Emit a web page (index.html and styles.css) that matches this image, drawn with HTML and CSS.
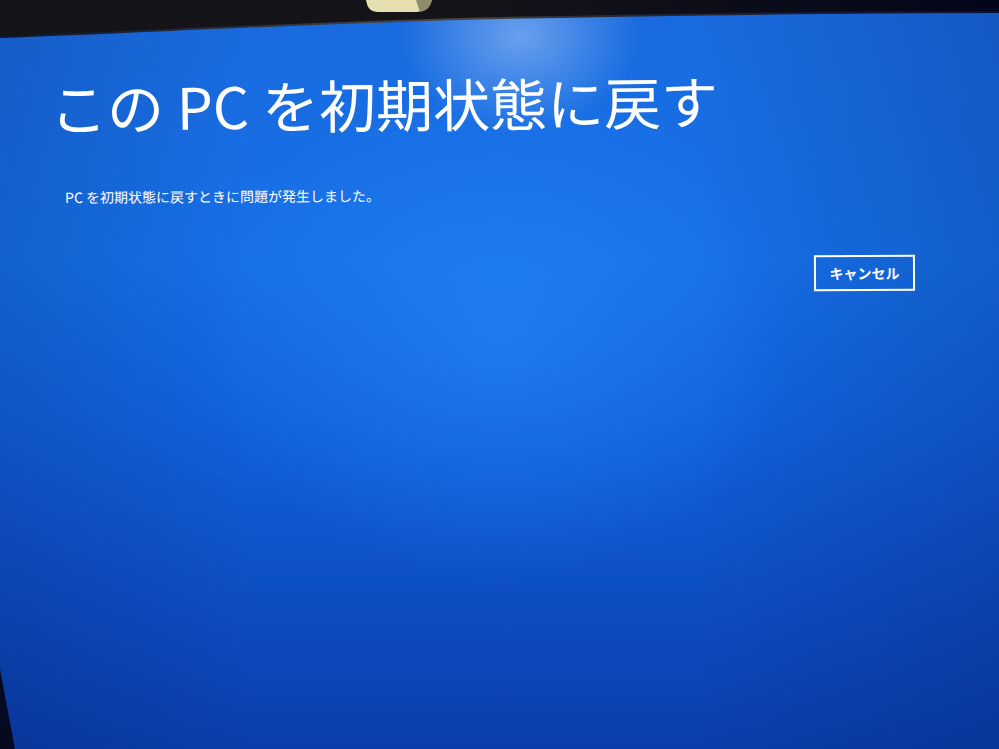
FILE: index.html
```html
<!DOCTYPE html>
<html lang="ja">
<head>
<meta charset="utf-8">
<title>このPCを初期状態に戻す</title>
<link rel="stylesheet" href="styles.css">
</head>
<body>
<div class="screen">
  <div class="glare"></div>
  <main class="content">
    <h1 class="title">この PC を初期状態に戻す</h1>
    <p class="message">PC を初期状態に戻すときに問題が発生しました。</p>
    <div class="actions">
      <button class="btn-cancel" type="button">キャンセル</button>
    </div>
  </main>
  <svg class="bezel" width="999" height="40" viewBox="0 0 999 40" aria-hidden="true">
    <defs>
      <linearGradient id="bz" x1="0" y1="0" x2="1" y2="0">
        <stop offset="0" stop-color="#141418"/>
        <stop offset="0.5" stop-color="#131319"/>
        <stop offset="1" stop-color="#04051a"/>
      </linearGradient>
      <linearGradient id="edge" x1="0" y1="0" x2="1" y2="0">
        <stop offset="0" stop-color="#0a1530"/>
        <stop offset="0.45" stop-color="#4a4842"/>
        <stop offset="0.6" stop-color="#2a2b36"/>
        <stop offset="1" stop-color="#0a1234"/>
      </linearGradient>
    </defs>
    <path d="M0 0 H999 V12 C800 12 650 15 500 18 C330 22 180 30 0 37 Z" fill="url(#bz)"/>
    <path d="M0 37 C180 30 330 22 500 18 C650 15 800 12 999 12" fill="none" stroke="url(#edge)" stroke-width="2"/>
    <path d="M366 0 H432 L430 5 C427 10 422 12 414 12 H378 C371 12 368 8 367 4 Z" fill="#e8dfb0"/>
    <path d="M416 0 H432 L430 5 C428 9 425 11 420 12 Z" fill="#8f8a6c"/>
  </svg>
  <svg class="corner" width="20" height="80" viewBox="0 0 20 80" aria-hidden="true">
    <path d="M0 0 L15 80 H0 Z" fill="#050a20"/>
  </svg>
</div>
</body>
</html>
```
FILE: styles.css
```css
html, body {
  margin: 0;
  padding: 0;
  width: 999px;
  height: 749px;
  overflow: hidden;
  background: #0b3fae;
}

.screen {
  position: relative;
  width: 999px;
  height: 749px;
  overflow: hidden;
  background:
    radial-gradient(ellipse 420px 360px at 500px 330px, rgba(40,140,255,0.5), rgba(40,140,255,0) 70%),
    linear-gradient(180deg, #1a6ade 0%, #1670e8 35%, #1262de 55%, #0d4dc2 80%, #0a3eaa 100%);
  font-family: "Noto Sans CJK JP", "Noto Sans", sans-serif;
  color: #ffffff;
}

.screen::after {
  content: "";
  position: absolute;
  inset: 0;
  background:
    linear-gradient(90deg, rgba(0,10,60,0.15) 0%, rgba(0,10,60,0) 25%, rgba(0,10,60,0) 70%, rgba(0,20,80,0.2) 100%);
  pointer-events: none;
}

.glare {
  position: absolute;
  left: 390px;
  top: 10px;
  width: 260px;
  height: 130px;
  background: radial-gradient(ellipse at 50% 20%, rgba(200,225,255,0.45), rgba(200,225,255,0) 65%);
  pointer-events: none;
}

.content {
  position: relative;
  z-index: 1;
  padding: 64px 0 0 50px;
}

.title {
  margin: 0;
  font-weight: 400;
  font-size: 57px;
  line-height: 84px;
  letter-spacing: 0;
  transform: rotate(-0.6deg);
  transform-origin: left center;
}

.message {
  margin: 39px 0 0 15px;
  font-size: 14px;
  line-height: 20px;
  font-weight: 400;
  transform: rotate(-0.3deg);
  transform-origin: left center;
}

.actions {
  display: flex;
  justify-content: flex-end;
  width: 865px;
  margin-top: 48px;
}

.btn-cancel {
  width: 101px;
  height: 36px;
  border: 2px solid #ffffff;
  background: transparent;
  color: #ffffff;
  font-family: "Noto Sans CJK JP", "Noto Sans", sans-serif;
  font-size: 14px;
  font-weight: 700;
  padding: 0;
  transform: rotate(-0.3deg);
}

.bezel {
  position: absolute;
  top: 0;
  left: 0;
  z-index: 3;
}

.corner {
  position: absolute;
  left: 0;
  bottom: 0;
  z-index: 3;
}
```
